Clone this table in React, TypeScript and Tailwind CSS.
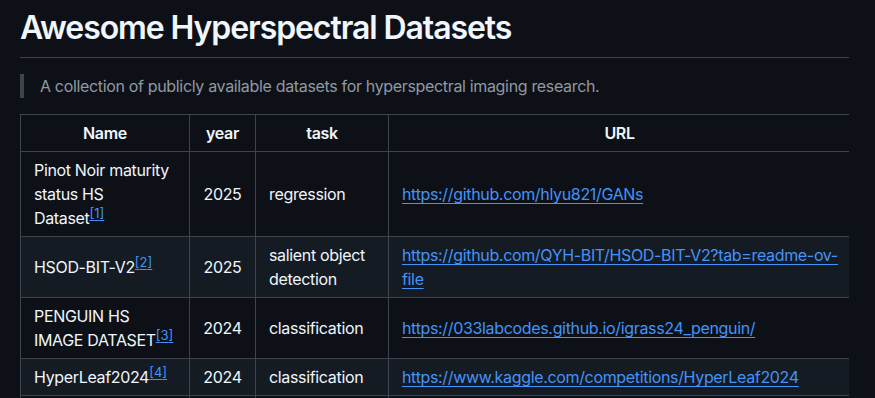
import React from 'react';

type Row = {
  name: string;
  note: number;
  year: string;
  task: string;
  url: string;
};

const ROWS: Row[] = [
  {
    name: 'Pinot Noir maturity status HS Dataset',
    note: 1,
    year: '2025',
    task: 'regression',
    url: 'https://github.com/hlyu821/GANs',
  },
  {
    name: 'HSOD-BIT-V2',
    note: 2,
    year: '2025',
    task: 'salient object detection',
    url: 'https://github.com/QYH-BIT/HSOD-BIT-V2?tab=readme-ov-file',
  },
  {
    name: 'PENGUIN HS IMAGE DATASET',
    note: 3,
    year: '2024',
    task: 'classification',
    url: 'https://033labcodes.github.io/igrass24_penguin/',
  },
  {
    name: 'HyperLeaf2024',
    note: 4,
    year: '2024',
    task: 'classification',
    url: 'https://www.kaggle.com/competitions/HyperLeaf2024',
  },
  {
    name: 'HyperPRI',
    note: 5,
    year: '2024',
    task: 'segmentation',
    url: 'https://github.com',
  },
];

function Ref({ n }: { n: number }) {
  return (
    <sup className="relative -top-[0.5em] align-baseline text-[13px] leading-[0] tracking-normal">
      <a href={`#fn${n}`} className="text-[#4493f8] underline underline-offset-[2px]">
        [{n}]
      </a>
    </sup>
  );
}

export default function App() {
  return (
    <div
      className="min-h-screen overflow-hidden bg-[#0d1117] pl-5 pr-[26px] pt-[8px] text-[16px] leading-6 tracking-[-0.021em] text-[#f0f6fc]"
      style={{ fontFamily: 'Inter, "Liberation Sans", sans-serif' }}
    >
      {/* Title */}
      <h1 className="mb-4 border-b border-[#3d444d] pb-[9px] text-[32px] font-semibold leading-10 tracking-[-0.034em]">
        Awesome Hyperspectral Datasets
      </h1>

      <blockquote className="mb-4 border-l-4 border-[#3d444d] px-4 text-[#9198a1]">
        A collection of publicly available datasets for hyperspectral imaging research.
      </blockquote>

      {/* Table */}
      <div className="w-[829px] overflow-hidden">
        <table className="w-[830px] table-fixed border-collapse">
          <colgroup>
            <col className="w-[169px]" />
            <col className="w-[66px]" />
            <col className="w-[133px]" />
            <col className="w-[462px]" />
          </colgroup>
          <thead>
            <tr className="bg-[#0d1117]">
              <th className="border border-[#3d444d] px-[13px] py-[6px] text-center font-semibold">Name</th>
              <th className="border border-[#3d444d] px-[13px] py-[6px] text-center font-semibold">year</th>
              <th className="border border-[#3d444d] px-[13px] py-[6px] text-center font-semibold">task</th>
              <th className="border border-[#3d444d] px-[13px] py-[6px] text-center font-semibold">URL</th>
            </tr>
          </thead>
          <tbody>
            {ROWS.map((r, i) => (
              <tr key={r.note} className={i % 2 === 0 ? 'bg-[#0d1117]' : 'bg-[#151b23]'}>
                <td className="border border-[#3d444d] px-[13px] py-[6px] align-middle">
                  {r.name}
                  <Ref n={r.note} />
                </td>
                <td className="border border-[#3d444d] px-[13px] py-[6px] text-center align-middle">{r.year}</td>
                <td className="border border-[#3d444d] px-[13px] py-[6px] align-middle">{r.task}</td>
                <td className="border border-[#3d444d] py-[6px] pl-[13px] pr-[8px] align-middle break-words">
                  <a href={r.url} className="text-[#4493f8] underline underline-offset-[3px]">
                    {r.url}
                  </a>
                </td>
              </tr>
            ))}
          </tbody>
        </table>
      </div>
    </div>
  );
}
